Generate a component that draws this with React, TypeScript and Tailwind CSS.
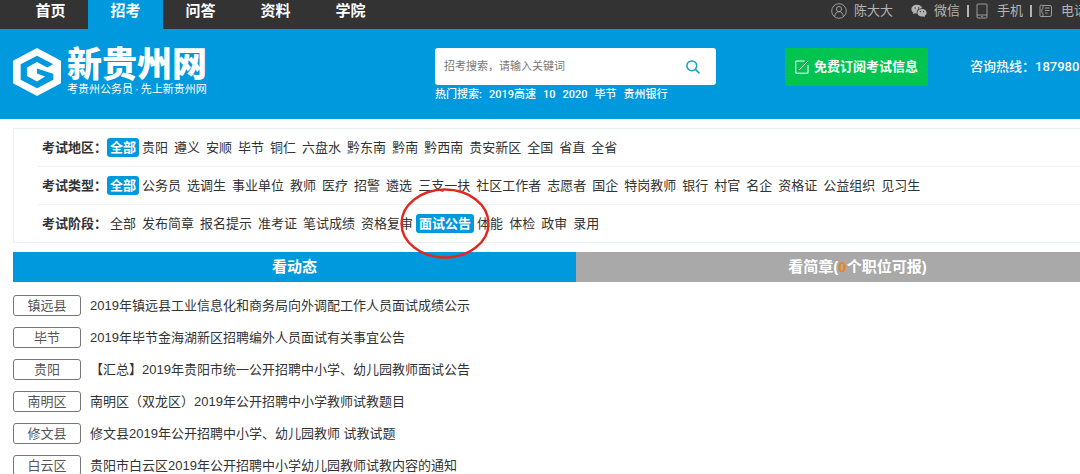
import React from "react";

const navItems = ["首页", "招考", "问答", "资料", "学院"];
const activeNav = "招考";

type Filter = { label: string; active: string; circled?: boolean; options: string[] };

const filters: Filter[] = [
  {
    label: "考试地区",
    active: "全部",
    options: ["全部", "贵阳", "遵义", "安顺", "毕节", "铜仁", "六盘水", "黔东南", "黔南", "黔西南", "贵安新区", "全国", "省直", "全省"],
  },
  {
    label: "考试类型",
    active: "全部",
    options: [
      "全部", "公务员", "选调生", "事业单位", "教师", "医疗", "招警", "遴选", "三支一扶", "社区工作者", "志愿者",
      "国企", "特岗教师", "银行", "村官", "名企", "资格证", "公益组织", "见习生",
    ],
  },
  {
    label: "考试阶段",
    active: "面试公告",
    circled: true,
    options: ["全部", "发布简章", "报名提示", "准考证", "笔试成绩", "资格复审", "面试公告", "体能", "体检", "政审", "录用"],
  },
];

const notices = [
  { area: "镇远县", title: "2019年镇远县工业信息化和商务局向外调配工作人员面试成绩公示" },
  { area: "毕节", title: "2019年毕节金海湖新区招聘编外人员面试有关事宜公告" },
  { area: "贵阳", title: "【汇总】2019年贵阳市统一公开招聘中小学、幼儿园教师面试公告" },
  { area: "南明区", title: "南明区（双龙区）2019年公开招聘中小学教师试教题目" },
  { area: "修文县", title: "修文县2019年公开招聘中小学、幼儿园教师 试教试题" },
  { area: "白云区", title: "贵阳市白云区2019年公开招聘中小学幼儿园教师试教内容的通知" },
];

const hotWords = ["2019高速", "10", "2020", "毕节", "贵州银行"];

function LogoMark() {
  return (
    <svg viewBox="0 0 47 47" className="size-12 shrink-0" aria-hidden="true">
      <path fill="#fff" fillRule="evenodd" d="M23.500 0 47 12.500V34.500L23.500 47 0 34.500V12.500ZM23.500 7.500 7.500 16V31L23.500 39.500 39.500 31V16Z" />
      <path fill="#fff" d="M23.500 13.800 33.500 19 40 15.500V25.500L23.500 20V25L31.500 28 23.500 32.800 13.700 27.500V19Z" />
    </svg>
  );
}

function UserIcon() {
  return (
    <svg viewBox="0 0 16 16" className="size-4" fill="none" stroke="currentColor" strokeWidth=".8" aria-hidden="true">
      <circle cx="8" cy="8" r="7.300" />
      <circle cx="8" cy="6" r="2.600" />
      <path d="M3.800 13.200C4 10.500 5.500 8.700 8 8.700s4 1.800 4.200 4.500" />
    </svg>
  );
}

function WechatIcon() {
  return (
    <svg viewBox="0 0 16 14" className="h-3.5 w-4" aria-hidden="true">
      <path fill="currentColor" d="M6 .8C2.900.8.400 2.800.400 5.300c0 1.400.8 2.600 2 3.400L2 10.300l1.900-1c.7.2 1.300.3 2 .3C5 6.500 7.500 4.300 11.200 4.300 10.700 2.300 8.500.8 6 .8Z" />
      <path fill="currentColor" d="M11 5c-2.600 0-4.600 1.700-4.600 3.800S8.400 12.600 11 12.600c.5 0 1-.1 1.500-.2l1.500.9-.4-1.400c1.200-.7 2-1.800 2-3.100C15.600 6.700 13.600 5 11 5Z" />
      <g fill="#333">
        <circle cx="4.200" cy="4" r=".7" />
        <circle cx="7.700" cy="4" r=".7" />
        <circle cx="9.500" cy="7.700" r=".6" />
        <circle cx="12.500" cy="7.700" r=".6" />
      </g>
    </svg>
  );
}

function PhoneIcon() {
  return (
    <svg viewBox="0 0 12 16" className="h-4 w-3" fill="none" stroke="currentColor" strokeWidth=".8" aria-hidden="true">
      <rect x="1" y="1" width="10" height="14" rx="1" />
      <path d="M1 12h10M5.200 13.500h1.600" />
    </svg>
  );
}

function DeskPhoneIcon() {
  return (
    <svg viewBox="0 0 13 14" className="h-3.5 w-[13px]" fill="none" stroke="currentColor" strokeWidth=".8" aria-hidden="true">
      <path d="M4 1.500h7a1.500 1.500 0 0 1 1.500 1.500v8a1.500 1.500 0 0 1-1.500 1.500H2.500" />
      <path d="M1 2c0-1.200 3-1.200 3 0v2.500L2.800 5.500v3L4 9.500v2.500c0 .8-3 .8-3 0Z" />
      <path d="M6 4h4.500M6 6.500h4.500M6 9h2.500" />
    </svg>
  );
}

function EditIcon() {
  return (
    <svg viewBox="0 0 14 14" className="size-3.5" fill="none" stroke="currentColor" aria-hidden="true">
      <path d="M9.500 1H.8v12.200H13V5M13.200.8 4.300 9.800" />
    </svg>
  );
}

function SearchIcon() {
  return (
    <svg viewBox="0 0 14 14" className="size-3.5" fill="none" stroke="currentColor" strokeWidth="1.500" aria-hidden="true">
      <circle cx="5.800" cy="5.800" r="4.900" />
      <path d="m9.400 9.400 4 4" />
    </svg>
  );
}

function TopBar() {
  return (
    <nav className="flex h-[29px] justify-between bg-[#333] pl-[13px]">
      <div className="flex">
        {navItems.map((item) => (
          <a
            key={item}
            href="#"
            className={
              item === activeNav
                ? "w-[75px] bg-[#0099de] text-center text-[15px] leading-[22px] font-bold text-white"
                : "w-[75px] text-center text-[15px] leading-[22px] font-bold text-white"
            }
          >
            {item}
          </a>
        ))}
      </div>
      <div className="flex h-[22px] w-[249px] shrink-0 items-center gap-[7px] text-[13px] whitespace-nowrap text-[#b4b4b4]">
        <a href="#" className="mr-[11px] flex shrink-0 items-center gap-[7px]">
          <UserIcon />
          陈大大
        </a>
        <a href="#" className="flex shrink-0 items-center gap-[7px]">
          <WechatIcon />
          微信
        </a>
        <span className="h-3 w-[2px] shrink-0 bg-[#b4b4b4]" />
        <a href="#" className="flex shrink-0 items-center gap-[9px]">
          <PhoneIcon />
          手机
        </a>
        <span className="h-3 w-[2px] shrink-0 bg-[#b4b4b4]" />
        <a href="#" className="flex shrink-0 items-center gap-[9px]">
          <DeskPhoneIcon />
          电话
        </a>
      </div>
    </nav>
  );
}

function Header() {
  return (
    <header className="flex h-[90px] items-start bg-[#0099de] pt-[19px] pl-[13px] whitespace-nowrap text-white">
      <a href="#" className="flex shrink-0 items-center gap-[6px]">
        <LogoMark />
        <span className="flex flex-col">
          <span className="text-[35px] leading-[34px] font-black">新贵州网</span>
          <span className="flex gap-[2px] text-[11px] leading-[14px]">
            <span>考贵州公务员</span>
            <span>·</span>
            <span>先上新贵州网</span>
          </span>
        </span>
      </a>
      <div className="ml-auto w-[281px] shrink-0">
        <form className="flex h-[37px] items-center rounded-[3px] bg-white pr-4 pl-[9px]" onSubmit={(e) => e.preventDefault()}>
          <input
            type="search"
            aria-label="招考搜索"
            placeholder="招考搜索，请输入关键词"
            className="min-w-0 flex-1 bg-transparent text-[11px] text-[#333] outline-none placeholder:text-[#777]"
          />
          <button type="submit" aria-label="搜索" className="text-[#1b9cc9]">
            <SearchIcon />
          </button>
        </form>
        <div className="flex gap-[7px] font-[Roboto,'Noto_Sans_CJK_SC',sans-serif] text-[11px] leading-5 font-medium">
          <span>热门搜索:</span>
          {hotWords.map((word) => (
            <a key={word} href="#">
              {word}
            </a>
          ))}
        </div>
      </div>
      <button type="button" className="ml-[69px] flex h-[38px] w-[143px] shrink-0 items-center justify-center gap-[5px] rounded-[2px] bg-[#00c44f] text-[13px] font-bold">
        <EditIcon />
        免费订阅考试信息
      </button>
      <p className="ml-[42px] w-[110px] shrink-0 font-[Roboto,'Noto_Sans_CJK_SC',sans-serif] text-[13px] leading-[37px] font-medium">
        咨询热线：187980
      </p>
    </header>
  );
}

function FilterPanel() {
  return (
    <section className="border border-[#e9f1f3] pl-6">
      {filters.map((filter) => (
        <div key={filter.label} className="flex h-[38px] items-center border-b border-[#eef2f3] pl-1 last:h-[37px] last:border-b-0">
          <h2 className="w-[65px] font-bold">{filter.label}：</h2>
          {filter.options.map((option) =>
            option === filter.active ? (
              <a key={option} href="#" className="relative rounded-[3px] bg-[#0099de] px-[3px] leading-[19px] font-bold text-white">
                {option}
                {filter.circled && (
                  <svg
                    viewBox="0 0 92 72"
                    className="pointer-events-none absolute top-1/2 left-1/2 z-10 h-[72px] w-[92px] max-w-none -translate-x-1/2 -translate-y-1/2"
                    aria-hidden="true"
                  >
                    <ellipse cx="46" cy="35.500" rx="43.500" ry="34" fill="none" stroke="#e0281c" strokeWidth="2.400" />
                  </svg>
                )}
              </a>
            ) : (
              <a key={option} href="#" className="px-[3px] leading-[19px]">
                {option}
              </a>
            ),
          )}
        </div>
      ))}
    </section>
  );
}

export default function App() {
  return (
    <div className="overflow-hidden bg-white font-['Liberation_Sans','Noto_Sans_CJK_SC',sans-serif] text-[13px] text-[#333]">
      <TopBar />
      <Header />
      <main className="ml-[13px] w-[calc(100%+46px)] pt-[9px] whitespace-nowrap">
        <FilterPanel />
        <div className="mt-[9px] grid grid-cols-2 text-[15px] leading-[30px] font-bold text-white">
          <button type="button" className="bg-[#0099de]">
            看动态
          </button>
          <button type="button" className="bg-[#a9a9a9]">
            看简章(<span className="text-[#f08519]">0</span>个职位可报)
          </button>
        </div>
        <ul className="flex flex-col gap-[11px] pt-[13px]">
          {notices.map((notice) => (
            <li key={notice.area} className="flex items-center gap-[9px]">
              <a href="#" className="w-[68px] rounded-[3px] border border-[#777] text-center leading-[19px] text-[#555]">
                {notice.area}
              </a>
              <a href="#">{notice.title}</a>
            </li>
          ))}
        </ul>
      </main>
    </div>
  );
}
